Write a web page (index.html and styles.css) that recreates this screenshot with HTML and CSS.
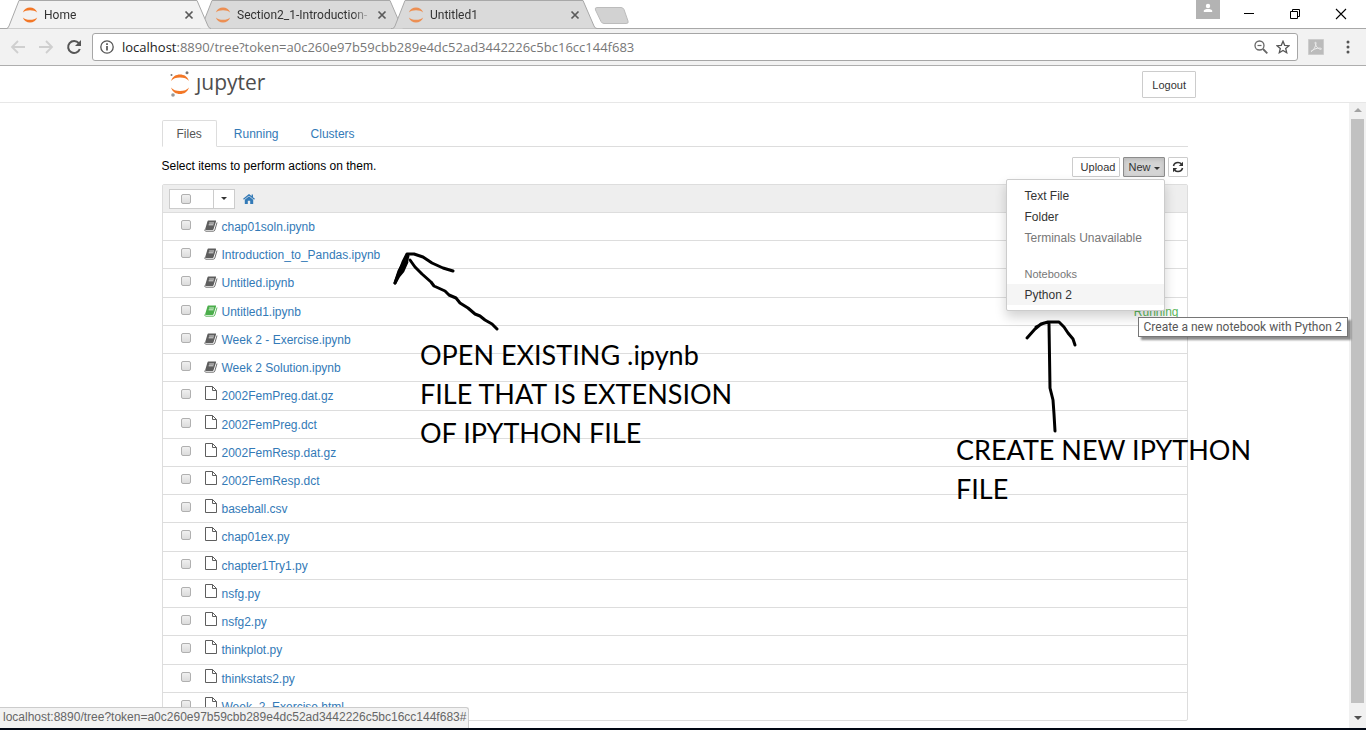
FILE: index.html
```html
<!DOCTYPE html>
<html lang="en">
<head>
<meta charset="utf-8">
<title>Home</title>
<link rel="stylesheet" href="styles.css">
</head>
<body>
<svg class="defs" aria-hidden="true">
  <symbol id="ring" viewBox="0 0 16 16"><path d="M0.8 5.6C2 2.4 4.8.6 8 .6s6 1.800 7.200 5C13.600 4 11 3.200 8 3.200S2.400 4 .8 5.600zM.8 10.400C2 13.600 4.800 15.400 8 15.400s6-1.800 7.200-5c-1.600 1.600-4.200 2.400-7.200 2.400s-5.600-.8-7.200-2.400z" fill="#f37726"/></symbol>
  <symbol id="x" viewBox="0 0 10 10"><path d="M1.500 1.500l7 7M8.500 1.500l-7 7" stroke="#5a5a5a" stroke-width="1.700"/></symbol>
  <symbol id="tab" viewBox="0 0 206 29"><path d="M0 28.500h1.500Q3 28.500 4 26L14 .5H192L203 26q1 2.500 3 2.500z" stroke="none"/><path d="M0 28.500h1.500Q3 28.500 4 26L14 .5H192L203 26q1 2.500 3 2.500" fill="none" stroke="#a8a8a8"/></symbol>
  <symbol id="book" viewBox="0 0 14 12"><path d="M4.300.5h7.200c.5 0 .7.4.5.9l-2.400 7.700c-.2.600-.5.800-1 .8H1.800c-.5 0-.8-.4-.6-.9L3.500 1.300c.2-.5.400-.8.800-.8z" fill="currentColor"/><path d="M5.200 3h4.800M4.700 4.800h4.800" stroke="#fff" stroke-width=".8"/><path d="M1 9.400c-.4 1 0 1.800.9 1.800h7.400c.7 0 1.200-.3 1.500-1.100l2.200-7.600" fill="none" stroke="currentColor" stroke-width=".9"/></symbol>
  <symbol id="file" viewBox="0 0 12 14"><path d="M.5.500h7l4 4v9H.500zM7.500.5v4h4" fill="none" stroke="currentColor"/></symbol>
</svg>

<header class="chrome">
  <div class="tabstrip">
    <div class="tab active"><svg class="shape"><use href="#tab"/></svg><svg class="fav"><use href="#ring"/></svg><span class="tab-title">Home</span><button class="plain close" aria-label="Close Home"><svg><use href="#x"/></svg></button></div>
    <div class="tab"><svg class="shape"><use href="#tab"/></svg><svg class="fav"><use href="#ring"/></svg><span class="tab-title">Section2_1-Introduction-</span><button class="plain close" aria-label="Close Section2_1"><svg><use href="#x"/></svg></button></div>
    <div class="tab"><svg class="shape"><use href="#tab"/></svg><svg class="fav"><use href="#ring"/></svg><span class="tab-title">Untitled1</span><button class="plain close" aria-label="Close Untitled1"><svg><use href="#x"/></svg></button></div>
    <button class="plain newtab" aria-label="New tab"><svg viewBox="0 0 36 18"><path d="M3 .5h24q2 0 3 2L34 14q1 2.500-2 2.500H10q-2 0-3-2L1.500 3Q.5.500 3 .5z" fill="#d2d2d2" stroke="#bcbcbc"/></svg></button>
    <div class="window-controls">
      <button class="plain user" aria-label="User"><svg width="24" height="19" viewBox="0 0 24 19"><path d="M0 0h24v19H0z" fill="#b3b3b3"/><circle cx="12" cy="6" r="2.200" fill="#fff"/><path d="M7.800 12V10.800C7.800 9.500 10 9 12 9s4.200.5 4.200 1.800V12z" fill="#fff"/></svg></button>
      <button class="plain win" aria-label="Minimize"><svg width="12" height="12"><path d="M1 5.500h10" stroke="#000"/></svg></button>
      <button class="plain win" aria-label="Restore"><svg width="12" height="12" fill="none" stroke="#000"><path d="M1.500 3.500h7v7h-7zM3.500 3V1.500h7v7H9"/></svg></button>
      <button class="plain win" aria-label="Close"><svg width="12" height="12" stroke="#000" stroke-width="1.100"><path d="M1 1l10 10M11 1L1 11"/></svg></button>
    </div>
  </div>
  <div class="toolbar">
    <button class="plain nav-btn" aria-label="Back"><svg width="16" height="16" fill="none" stroke="#cfcfcf" stroke-width="1.800"><path d="M15 8H2M8 2L2 8l6 6"/></svg></button>
    <button class="plain nav-btn" aria-label="Forward"><svg width="16" height="16" fill="none" stroke="#cfcfcf" stroke-width="1.800"><path d="M1 8h13M8 2l6 6-6 6"/></svg></button>
    <button class="plain nav-btn" aria-label="Reload"><svg width="16" height="16"><path d="M12.800 4.200A6 6 0 1 0 13.800 10" fill="none" stroke="#555" stroke-width="2"/><path d="M15 1v6H9z" fill="#555"/></svg></button>
    <div class="omnibox">
      <svg width="14" height="14"><circle cx="7" cy="7" r="6.200" fill="none" stroke="#555" stroke-width="1.300"/><path d="M7 6v4.500M7 3.300v1.700" stroke="#555" stroke-width="1.700"/></svg>
      <span class="url"><b>localhost</b>:8890/tree?token=a0c260e97b59cbb289e4dc52ad3442226c5bc16cc144f683</span>
      <button class="plain" aria-label="Zoom"><svg width="14" height="14" fill="none" stroke="#666"><circle cx="5.500" cy="5.500" r="4.500" stroke-width="1.300"/><path d="M3.500 5.500h4" stroke-width="1.200"/><path d="M9 9l4.300 4.300" stroke-width="1.800"/></svg></button>
      <button class="plain" aria-label="Bookmark"><svg width="14" height="14" viewBox="0 0 14 14"><path d="M7 1.300l1.700 4 4.300.4-3.300 2.800 1 4.200L7 10.500l-3.700 2.200 1-4.200L1 5.700l4.300-.4z" fill="none" stroke="#555" stroke-width="1.300"/></svg></button>
    </div>
    <button class="plain pdf" aria-label="PDF extension"><svg width="16" height="16"><path d="M.5.500h15v15H.5z" fill="#bbb" stroke="#ccc"/><path d="M3 12.500c2-.5 5-5 5-8.500 0-1.500-1.200-1.200-.8.500C8 8 11 10.500 13 10.300c1-.3.200-1.300-1.500-1.200C8.500 9 5 10.500 3 12.500z" fill="none" stroke="#eee"/></svg></button>
    <button class="plain more" aria-label="Menu"><svg width="4" height="14" fill="#555"><circle cx="2" cy="2" r="1.500"/><circle cx="2" cy="7" r="1.500"/><circle cx="2" cy="12" r="1.500"/></svg></button>
  </div>
</header>

<header class="site-header">
  <div class="container">
    <a class="logo" href="#"><svg width="20" height="26" viewBox="0 0 20 26"><path d="M1 10C2.500 5.500 6 3.500 10 3.500s7.500 2 9 6.500C17 7.500 14 6.500 10 6.500S3 7.500 1 10zM1 16.500C2.500 21 6 23 10 23s7.500-2 9-6.500c-2 2.500-5 3.500-9 3.500s-7-1-9-3.500z" fill="#f37726"/><circle cx="1.500" cy="4" r="1" fill="#777"/><circle cx="17" cy="1.800" r="1.500" fill="#777"/><circle cx="3" cy="24" r="1.800" fill="#999"/></svg><span>ȷupyter</span></a>
    <button class="btn logout">Logout</button>
  </div>
</header>

<div class="page">
  <main class="container">
    <nav class="nav-tabs"><a class="current" href="#">Files</a><a href="#">Running</a><a href="#">Clusters</a></nav>
    <div class="actions">
      <span class="hint">Select items to perform actions on them.</span>
      <button class="btn upload">Upload</button>
      <div class="dropdown">
        <button class="btn new">New <i class="caret"></i></button>
        <div class="menu">
          <a href="#">Text File</a><a href="#">Folder</a><span>Terminals Unavailable</span>
          <span class="menu-heading">Notebooks</span>
          <a class="hover" href="#">Python 2</a>
          <div class="tooltip" role="tooltip">Create a new notebook with Python 2</div>
        </div>
      </div>
      <button class="btn refresh" aria-label="Refresh"><svg width="12" height="12" viewBox="0 0 12 12"><path d="M1.500 5C2 2.800 3.800 1.500 6 1.500c1.400 0 2.500.5 3.400 1.400M10.500 7c-.5 2.200-2.300 3.500-4.500 3.500-1.400 0-2.500-.5-3.400-1.400" fill="none" stroke="#333" stroke-width="1.600"/><path d="M11 .8V5H6.800zM1 11.200V7h4.200z" fill="#333"/></svg></button>
    </div>
    <div class="list">
      <div class="list-head">
        <div class="select-all"><label><input type="checkbox" aria-label="Select all"></label><button class="plain" aria-label="Selection options"><i class="caret"></i></button></div>
        <a class="home" href="#" aria-label="Home folder"><svg width="12" height="10" viewBox="0 0 12 10"><path d="M6 2.200L10.200 5.700V10H7.200V6.800H4.800V10H1.800V5.700z" fill="#337ab7"/><path d="M.5 5.300L6 .8l5.500 4.500M9.300.5v3" fill="none" stroke="#337ab7" stroke-width="1.300"/></svg></a>
      </div>
      <div class="row nb"><input type="checkbox" aria-label="chap01soln.ipynb"><svg><use href="#book"/></svg><a href="#">chap01soln.ipynb</a></div>
      <div class="row nb"><input type="checkbox" aria-label="Introduction_to_Pandas.ipynb"><svg><use href="#book"/></svg><a href="#">Introduction_to_Pandas.ipynb</a></div>
      <div class="row nb"><input type="checkbox" aria-label="Untitled.ipynb"><svg><use href="#book"/></svg><a href="#">Untitled.ipynb</a></div>
      <div class="row nb live"><input type="checkbox" aria-label="Untitled1.ipynb"><svg><use href="#book"/></svg><a href="#">Untitled1.ipynb</a><span class="state">Running</span></div>
      <div class="row nb"><input type="checkbox" aria-label="Week 2 - Exercise.ipynb"><svg><use href="#book"/></svg><a href="#">Week 2 - Exercise.ipynb</a></div>
      <div class="row nb"><input type="checkbox" aria-label="Week 2 Solution.ipynb"><svg><use href="#book"/></svg><a href="#">Week 2 Solution.ipynb</a></div>
      <div class="row"><input type="checkbox" aria-label="2002FemPreg.dat.gz"><svg><use href="#file"/></svg><a href="#">2002FemPreg.dat.gz</a></div>
      <div class="row"><input type="checkbox" aria-label="2002FemPreg.dct"><svg><use href="#file"/></svg><a href="#">2002FemPreg.dct</a></div>
      <div class="row"><input type="checkbox" aria-label="2002FemResp.dat.gz"><svg><use href="#file"/></svg><a href="#">2002FemResp.dat.gz</a></div>
      <div class="row"><input type="checkbox" aria-label="2002FemResp.dct"><svg><use href="#file"/></svg><a href="#">2002FemResp.dct</a></div>
      <div class="row"><input type="checkbox" aria-label="baseball.csv"><svg><use href="#file"/></svg><a href="#">baseball.csv</a></div>
      <div class="row"><input type="checkbox" aria-label="chap01ex.py"><svg><use href="#file"/></svg><a href="#">chap01ex.py</a></div>
      <div class="row"><input type="checkbox" aria-label="chapter1Try1.py"><svg><use href="#file"/></svg><a href="#">chapter1Try1.py</a></div>
      <div class="row"><input type="checkbox" aria-label="nsfg.py"><svg><use href="#file"/></svg><a href="#">nsfg.py</a></div>
      <div class="row"><input type="checkbox" aria-label="nsfg2.py"><svg><use href="#file"/></svg><a href="#">nsfg2.py</a></div>
      <div class="row"><input type="checkbox" aria-label="thinkplot.py"><svg><use href="#file"/></svg><a href="#">thinkplot.py</a></div>
      <div class="row"><input type="checkbox" aria-label="thinkstats2.py"><svg><use href="#file"/></svg><a href="#">thinkstats2.py</a></div>
      <div class="row"><input type="checkbox" aria-label="Week_2_Exercise.html"><svg><use href="#file"/></svg><a href="#">Week_2_Exercise.html</a></div>
    </div>
  </main>
  <div class="scrollbar" aria-hidden="true"><i class="arrow up"></i><div class="thumb"></div><i class="arrow down"></i></div>
  <div class="status">localhost:8890/tree?token=a0c260e97b59cbb289e4dc52ad3442226c5bc16cc144f683#</div>
</div>
<footer class="taskbar"></footer>

<svg class="ink" width="1366" height="730" aria-hidden="true"><g fill="none" stroke="#000" stroke-width="3" stroke-linecap="round" stroke-linejoin="round"><path d="M453 271L443 268 432 263 423 257 414 254H407L403 262 395 283M410 260L415 267 422 274 431 282 434 286 445 291 449 295 456 298 460 303 468 308 475 314 480 316 485 320 492 324 497 329"/><path d="M408 256L405 266 401 272 395 283 399 271 404 262M407 262L403 271 398 277"/><path d="M1027 338l8-9 6-5 7-2h11l5 5 4 6 5 6 2 6M1036 327l8-4 6-1M1049 324l1 64 3 12 1 14 1 17"/></g></svg>
<p class="note note-open">OPEN EXISTING .ipynb<br>FILE THAT IS EXTENSION<br>OF IPYTHON FILE</p>
<p class="note note-create">CREATE NEW IPYTHON<br>FILE</p>
</body>
</html>
```
FILE: styles.css
```css
* { box-sizing: border-box; }
body { margin: 0; height: 100vh; display: flex; flex-direction: column; overflow: hidden; position: relative; background: #fff; color: #000; font: 12px/20px "Liberation Sans", Arial, sans-serif; }
.defs { position: absolute; width: 0; height: 0; }
svg { display: block; flex: none; }
a { color: #337ab7; text-decoration: none; }
button { font: inherit; }
.plain { border: 0; padding: 0; margin: 0; background: none; display: flex; align-items: center; justify-content: center; }

.chrome { flex: none; font-family: Roboto, sans-serif; }
.tabstrip { display: flex; height: 28px; padding-left: 5px; }
.tab { position: relative; isolation: isolate; display: flex; align-items: center; width: 206px; height: 29px; padding: 0 17px; fill: #dadada; }
.tab + .tab { margin-left: -13px; }
.tab.active { z-index: 1; fill: #f2f2f2; }
.shape { position: absolute; left: 0; top: 0; width: 206px; height: 29px; z-index: -1; }
.fav { width: 16px; height: 16px; }
.tab:not(.active) .fav { opacity: .75; }
.tab-title { flex: 1; min-width: 0; margin: 0 5px 0 6px; overflow: hidden; white-space: nowrap; color: #333; -webkit-mask-image: linear-gradient(to left, transparent, #000 20px); mask-image: linear-gradient(to left, transparent, #000 20px); }
.close { width: 10px; }
.close svg { width: 10px; height: 10px; }
.newtab { width: 36px; height: 18px; margin: 7px 0 0 -3px; }
.newtab svg { width: 36px; height: 18px; }
.window-controls { margin-left: auto; display: flex; align-items: flex-start; padding-right: 2px; }
.user { margin-right: 6px; }
.win { width: 46px; height: 27px; }
.toolbar { display: flex; align-items: center; height: 38px; background: #f2f2f2; border-top: 1px solid #a8a8a8; border-bottom: 1px solid #aeaeae; padding: 0 16px 0 10px; }
.nav-btn { width: 28px; height: 28px; justify-content: flex-start; }
.omnibox { flex: 1; display: flex; align-items: center; gap: 8px; height: 28px; margin: 0 10px 0 -2px; padding: 0 7px; background: #fff; border: 1px solid #a6a6a6; border-radius: 3px; }
.url { flex: 1; min-width: 0; font: 13px/20px "Open Sans", sans-serif; color: #777; white-space: nowrap; }
.url b { font-weight: 400; color: #222; }
.more { margin-left: 22px; }

.container { width: 1026px; max-width: 100%; margin: 0 auto; }
.site-header { flex: none; height: 37px; border-bottom: 1px solid #e7e7e7; }
.site-header .container { display: flex; justify-content: space-between; padding-top: 5px; }
.logo { display: flex; gap: 6px; font: 21px/22px "Open Sans", sans-serif; color: #4e4e4e; }
.btn { height: 20px; border: 1px solid #ccc; border-radius: 1px; background: #fff; color: #333; font-size: 11px; line-height: 18px; padding: 0 4px; white-space: nowrap; }
.site-header .btn { height: 27px; padding: 0 9px; }

.page { flex: 1; min-height: 0; position: relative; display: flex; }
main.container { display: flex; flex-direction: column; padding: 17px 0 7px; }
.nav-tabs { display: flex; gap: 2px; height: 27px; border-bottom: 1px solid #ddd; }
.nav-tabs a { height: 27px; padding: 2px 14px 0; border: 1px solid transparent; line-height: 22px; }
.nav-tabs .current { color: #555; background: #fff; border-color: #ddd #ddd #fff; border-radius: 2px 2px 0 0; }
.actions { display: flex; gap: 3px; padding: 10px 0 7px; }
.hint { flex: 1; line-height: 18px; }
.upload { padding-left: 8px; }
.dropdown { position: relative; }
.new { background: #d4d4d4; border-color: #8c8c8c; box-shadow: inset 0 2px 4px rgba(0,0,0,.12); }
.caret { display: inline-block; border: 3px solid transparent; border-top-color: #333; border-bottom: 0; vertical-align: middle; }
.refresh { width: 20px; padding: 0 3px; }
.menu { position: absolute; z-index: 5; right: 0; top: 22px; width: 159px; padding: 5px 0; background: #fff; border: 1px solid #ccc; border-radius: 2px; box-shadow: 0 6px 12px rgba(0,0,0,.18); }
.menu a, .menu span { display: block; padding: 0 18px; line-height: 22px; height: 21px; color: #333; white-space: nowrap; }
.menu span { color: #777; }
.menu .menu-heading { margin-top: 16px; height: 20px; line-height: 20px; font-size: 11px; }
.menu .hover { background: #f5f5f5; }
.tooltip { position: absolute; left: 131px; top: 137px; height: 20px; padding: 0 5px; border: 1px solid #767676; background: #fff; color: #575757; font: 12px/18px Roboto, sans-serif; white-space: nowrap; box-shadow: 3px 3px 2px rgba(0,0,0,.45); }

.list { flex: 1; min-height: 0; display: flex; flex-direction: column; border: 1px solid #ddd; border-radius: 2px; }
.list-head { flex: none; height: 27px; display: flex; align-items: center; gap: 8px; padding-left: 6px; background: #eee; }
.select-all { display: flex; height: 20px; border: 1px solid #ccc; background: #fff; }
.select-all label { width: 44px; display: flex; align-items: center; padding-left: 11px; border-right: 1px solid #ccc; }
.select-all button { width: 20px; }
input[type="checkbox"] { appearance: none; flex: none; width: 10px; height: 10px; margin: 0; border: 1px solid #b0b0b0; border-radius: 2px; background: linear-gradient(#f0f0f0, #dcdcdc); }
.row { flex: 1 1 28px; min-height: 0; display: flex; align-items: flex-start; padding: 0 8px 0 18px; border-top: 1px solid #ddd; }
.row input { margin-top: 7px; }
.row svg { width: 12px; height: 14px; margin: 4px 5px 0 14px; color: #5e5e5e; }
.row.nb svg { width: 14px; height: 12px; margin: 7px 4px 0 13px; }
.row.live svg { color: #4cae4c; }
.row a { margin-top: 4px; }
.state { margin: 4px 0 0 auto; color: #5cb85c; }

.scrollbar { flex: none; width: 17px; display: flex; flex-direction: column; align-items: center; background: #f1f1f1; }
.thumb { flex: 1; width: 13px; margin: 7px 0 13px; background: #c1c1c1; }
.arrow { border: 4px solid transparent; }
.up { margin-top: 5px; border-top: 0; border-bottom-color: #a3a3a3; }
.down { margin-bottom: 8px; border-bottom: 0; border-top-color: #505050; }
.status { position: absolute; left: 0; bottom: 0; height: 21px; padding: 0 2px 0 3px; background: #f2f2f2; border: 1px solid #ccc; border-width: 1px 1px 0 0; border-radius: 0 3px 0 0; color: #666; font: 12px/19px "Liberation Sans", sans-serif; white-space: nowrap; }
.taskbar { flex: none; height: 2px; background: #020814; }

.ink { position: absolute; left: 0; top: 0; z-index: 8; pointer-events: none; }
.note { position: absolute; z-index: 8; margin: 0; font: 27px/39px Lato, sans-serif; color: #000; white-space: nowrap; }
.note-open { left: 420px; top: 335px; }
.note-create { left: 956px; top: 430px; }
```
